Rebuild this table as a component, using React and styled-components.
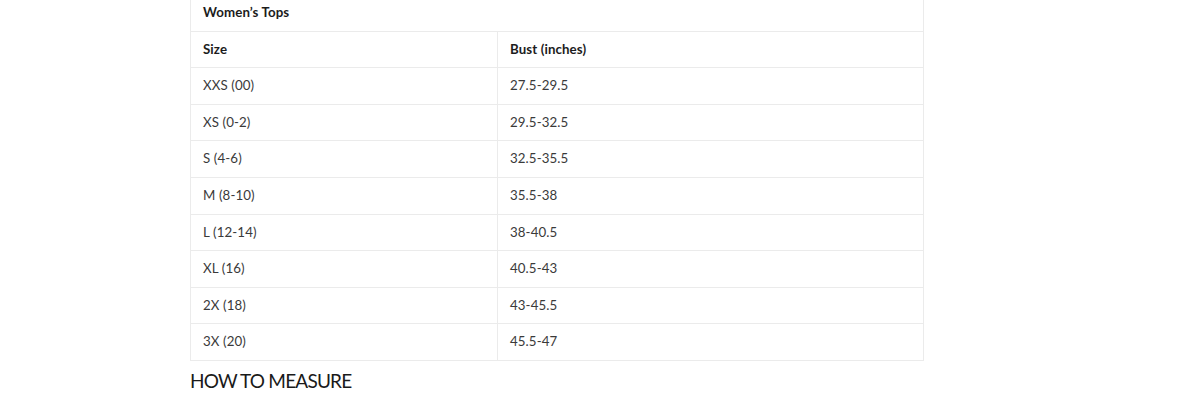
import React from 'react'
import styled, { createGlobalStyle } from 'styled-components'

const Global = createGlobalStyle`
  html, body { margin: 0; padding: 0; background: #fff; }
  body { font-family: Lato, "Open Sans", sans-serif; color: #333; }
`

const Page = styled.div`
  padding-left: 190px;
  margin-top: -6px;
  width: 734px;
`

const Table = styled.table`
  width: 100%;
  border-collapse: collapse;
  table-layout: fixed;
  border: 1px solid #ebebeb;
`

const Cell = styled.td`
  border: 1px solid #ebebeb;
  padding: 8px 12px;
  height: 19.6px;
  line-height: 19.6px;
  font-size: 13.3px;
  color: ${p => (p.$head ? '#1c1c1c' : '#3a3a3a')};
  font-weight: ${p => (p.$head ? 700 : 400)};
  text-align: left;
  vertical-align: middle;
  letter-spacing: 0.1px;
`

const Heading = styled.h3`
  margin: 8px 0 0;
  font-size: 19px;
  font-weight: 400;
  line-height: 24px;
  color: #1a1a1a;
  letter-spacing: -0.8px;
`

const rows = [
  ['XXS (00)', '27.5-29.5'],
  ['XS (0-2)', '29.5-32.5'],
  ['S (4-6)', '32.5-35.5'],
  ['M (8-10)', '35.5-38'],
  ['L (12-14)', '38-40.5'],
  ['XL (16)', '40.5-43'],
  ['2X (18)', '43-45.5'],
  ['3X (20)', '45.5-47'],
]

export default function App() {
  return (
    <>
      <Global />
      <Page>
        <Table>
          <colgroup>
            <col style={{ width: 307 }} />
            <col />
          </colgroup>
          <thead>
            <tr>
              <Cell as="th" colSpan={2} $head>Women’s Tops</Cell>
            </tr>
            <tr>
              <Cell as="th" $head>Size</Cell>
              <Cell as="th" $head>Bust (inches)</Cell>
            </tr>
          </thead>
          <tbody>
            {rows.map(r => (
              <tr key={r[0]}>
                <Cell>{r[0]}</Cell>
                <Cell>{r[1]}</Cell>
              </tr>
            ))}
          </tbody>
        </Table>
        <Heading>HOW TO MEASURE</Heading>
      </Page>
    </>
  )
}
